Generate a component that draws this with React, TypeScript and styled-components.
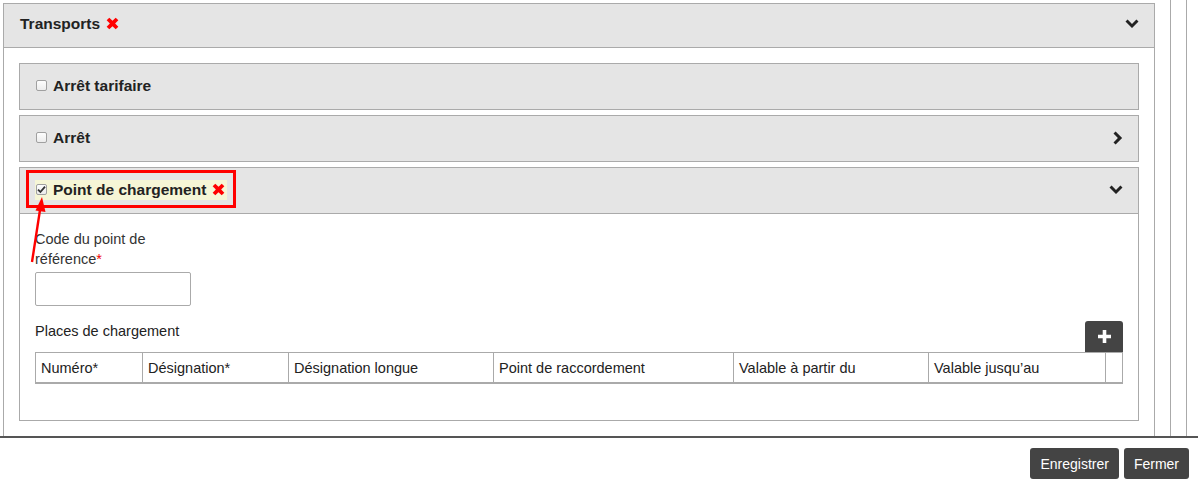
import React from "react";
import styled, { createGlobalStyle } from "styled-components";

const GlobalStyle = createGlobalStyle`
  html, body { margin: 0; padding: 0; background: #fff; }
  body {
    font-family: "Liberation Sans", Arial, sans-serif;
    color: #222;
    -webkit-font-smoothing: antialiased;
  }
  * { box-sizing: border-box; }
`;

const Page = styled.div`
  width: 1198px;
  height: 485px;
  display: flex;
  flex-direction: column;
  overflow: hidden;
`;

const ScrollArea = styled.div`
  height: 436px;
  flex: none;
  display: flex;
  align-items: flex-start;
  overflow: hidden;
`;

const OuterPanel = styled.section`
  width: 1152px;
  flex: none;
  margin: 3px 0 0 3px;
  border: 1px solid #aaa;
  background: #fff;
`;

const OuterHeader = styled.header`
  height: 44px;
  background: #e5e5e5;
  border-bottom: 1px solid #aaa;
  display: flex;
  align-items: center;
  justify-content: space-between;
  padding: 0 15px 4px 15px;
`;

const OuterBody = styled.div`
  padding: 15px;
  display: flex;
  flex-direction: column;
  gap: 5px;
`;

const SideStrip = styled.div`
  align-self: stretch;
  flex: none;
  width: 17px;
  margin-left: 15px;
  border-left: 1px solid #aaa;
  border-right: 1px solid #aaa;
`;

const Title = styled.span`
  font-size: 15.5px;
  font-weight: 700;
  color: #222;
  line-height: 20px;
`;

const Panel = styled.div`
  position: relative;
  border: 1px solid #aaa;
  background: #fff;
`;

const PanelHeader = styled.div<{ $open?: boolean }>`
  height: ${(p) => (p.$open ? 46 : 45)}px;
  background: #e5e5e5;
  border-bottom: ${(p) => (p.$open ? "1px solid #aaa" : "none")};
  display: flex;
  align-items: center;
  justify-content: space-between;
  padding: 0 15px 2px;
`;

const TitleGroup = styled.span<{ $highlight?: boolean }>`
  display: inline-flex;
  align-items: center;
  height: 20px;
  padding: 0 2px 0 1px;
  background: ${(p) => (p.$highlight ? "#f6f6d6" : "transparent")};
`;

const CheckBox = styled.span`
  width: 11px;
  height: 11px;
  border: 1px solid #a0a0a0;
  border-radius: 2px;
  background: linear-gradient(#fdfdfd, #ececec);
  margin-right: 6px;
  display: inline-flex;
  align-items: center;
  justify-content: center;
  flex: none;
`;

const RedX = styled.svg`
  width: 13px;
  height: 13px;
  margin-left: 6px;
  flex: none;
`;

const Chevron = styled.svg`
  flex: none;
  display: block;
`;

const PanelBody = styled.div`
  padding: 15px 15px 36px;
`;

const FieldGroup = styled.div`
  width: 156px;
  display: flex;
  flex-direction: column;
`;

const Label = styled.label`
  font-size: 14.5px;
  line-height: 20px;
  color: #333;
`;

const Required = styled.span`
  color: #e00;
`;

const TextInput = styled.input`
  margin-top: 3px;
  width: 156px;
  height: 34px;
  border: 1px solid #aaa;
  border-radius: 2px;
  background: #fff;
  font: inherit;
  padding: 0 6px;
`;

const SectionRow = styled.div`
  margin-top: 15px;
  display: flex;
  justify-content: space-between;
  align-items: flex-start;
`;

const SectionTitle = styled.span`
  font-size: 14.5px;
  line-height: 20px;
  color: #222;
`;

const AddButton = styled.button`
  width: 38px;
  height: 31px;
  border: none;
  border-radius: 3px 3px 0 0;
  background: #444;
  display: flex;
  align-items: center;
  justify-content: center;
  padding: 0;
`;

const Table = styled.div`
  display: grid;
  grid-template-columns: 106px 146px 205px 240px 195px 177px 1fr;
  border: 1px solid #aaa;
  border-bottom-width: 2px;
  height: 32px;
`;

const HeadCell = styled.div<{ $first?: boolean }>`
  border-left: ${(p) => (p.$first ? "none" : "1px solid #aaa")};
  padding-left: 5px;
  display: flex;
  align-items: center;
  font-size: 14.5px;
  color: #222;
  white-space: nowrap;
`;

const Footer = styled.footer`
  flex: none;
  border-top: 2px solid #555;
  display: flex;
  justify-content: flex-end;
  gap: 5px;
  padding: 10px 9px 0 0;
`;

const DarkButton = styled.button`
  height: 31px;
  padding: 0 10px;
  border: none;
  border-radius: 3px;
  background: #444;
  color: #fff;
  font-family: "Liberation Sans", Arial, sans-serif;
  font-size: 14px;
`;

const Annotation = styled.div`
  position: absolute;
  left: 6px;
  top: 2px;
  width: 210px;
  height: 38px;
  border: 3px solid #f00;
  pointer-events: none;
`;

const Arrow = styled.svg`
  position: absolute;
  left: 0;
  top: 0;
  overflow: visible;
  pointer-events: none;
`;

const XIcon = () => (
  <RedX viewBox="0.6 0.6 11.8 11.8" aria-hidden>
    <path
      d="M1.2 3.6 L3.6 1.2 L6.5 4.1 L9.4 1.2 L11.8 3.6 L8.9 6.5 L11.8 9.4 L9.4 11.8 L6.5 8.9 L3.6 11.8 L1.2 9.4 L4.1 6.5 Z"
      fill="#f00"
    />
  </RedX>
);

const ChevronDown = () => (
  <Chevron width="14" height="10" viewBox="0 0 14 10" aria-hidden>
    <path d="M0.5 2.6 L2.6 0.5 L7 4.9 L11.4 0.5 L13.5 2.6 L7 9.1 Z" fill="#222" />
  </Chevron>
);

const ChevronRight = () => (
  <Chevron width="10" height="14" viewBox="0 0 10 14" aria-hidden>
    <path d="M2.6 0.5 L0.5 2.6 L4.9 7 L0.5 11.4 L2.6 13.5 L9.1 7 Z" fill="#222" />
  </Chevron>
);

const Check = ({ checked }: { checked?: boolean }) => (
  <CheckBox>
    {checked && (
      <svg width="9" height="9" viewBox="0 0 9 9" aria-hidden>
        <path d="M1 4.6 L3.4 7 L8 1.6" stroke="#333" strokeWidth="1.8" fill="none" />
      </svg>
    )}
  </CheckBox>
);

const columns = [
  "Numéro*",
  "Désignation*",
  "Désignation longue",
  "Point de raccordement",
  "Valable à partir du",
  "Valable jusqu’au",
  "",
];

export default function App() {
  return (
    <Page>
      <GlobalStyle />
      <ScrollArea>
        <OuterPanel>
          <OuterHeader>
            <TitleGroup>
              <Title>Transports</Title>
              <XIcon />
            </TitleGroup>
            <ChevronDown />
          </OuterHeader>
          <OuterBody>
            <Panel>
              <PanelHeader>
                <TitleGroup>
                  <Check />
                  <Title>Arrêt tarifaire</Title>
                </TitleGroup>
              </PanelHeader>
            </Panel>
            <Panel>
              <PanelHeader>
                <TitleGroup>
                  <Check />
                  <Title>Arrêt</Title>
                </TitleGroup>
                <ChevronRight />
              </PanelHeader>
            </Panel>
            <Panel>
              <PanelHeader $open>
                <TitleGroup $highlight>
                  <Check checked />
                  <Title>Point de chargement</Title>
                  <XIcon />
                </TitleGroup>
                <ChevronDown />
              </PanelHeader>
              <PanelBody>
                <FieldGroup>
                  <Label>
                    Code du point de référence<Required>*</Required>
                  </Label>
                  <TextInput type="text" />
                </FieldGroup>
                <SectionRow>
                  <SectionTitle>Places de chargement</SectionTitle>
                  <AddButton aria-label="Ajouter">
                    <svg width="13" height="13" viewBox="0 0 13 13" aria-hidden>
                      <path d="M4.7 0 H8.3 V4.7 H13 V8.3 H8.3 V13 H4.7 V8.3 H0 V4.7 H4.7 Z" fill="#fff" />
                    </svg>
                  </AddButton>
                </SectionRow>
                <Table role="table">
                  {columns.map((c, i) => (
                    <HeadCell key={i} $first={i === 0} role="columnheader">
                      {c}
                    </HeadCell>
                  ))}
                </Table>
              </PanelBody>
              <Annotation />
              <Arrow width="40" height="100" viewBox="0 0 40 100" aria-hidden>
                <line x1="12" y1="94" x2="20" y2="42" stroke="#f00" strokeWidth="2.4" />
                <polygon points="22,29 25.5,44 15.5,42.5" fill="#f00" />
              </Arrow>
            </Panel>
          </OuterBody>
        </OuterPanel>
        <SideStrip />
      </ScrollArea>
      <Footer>
        <DarkButton>Enregistrer</DarkButton>
        <DarkButton>Fermer</DarkButton>
      </Footer>
    </Page>
  );
}
